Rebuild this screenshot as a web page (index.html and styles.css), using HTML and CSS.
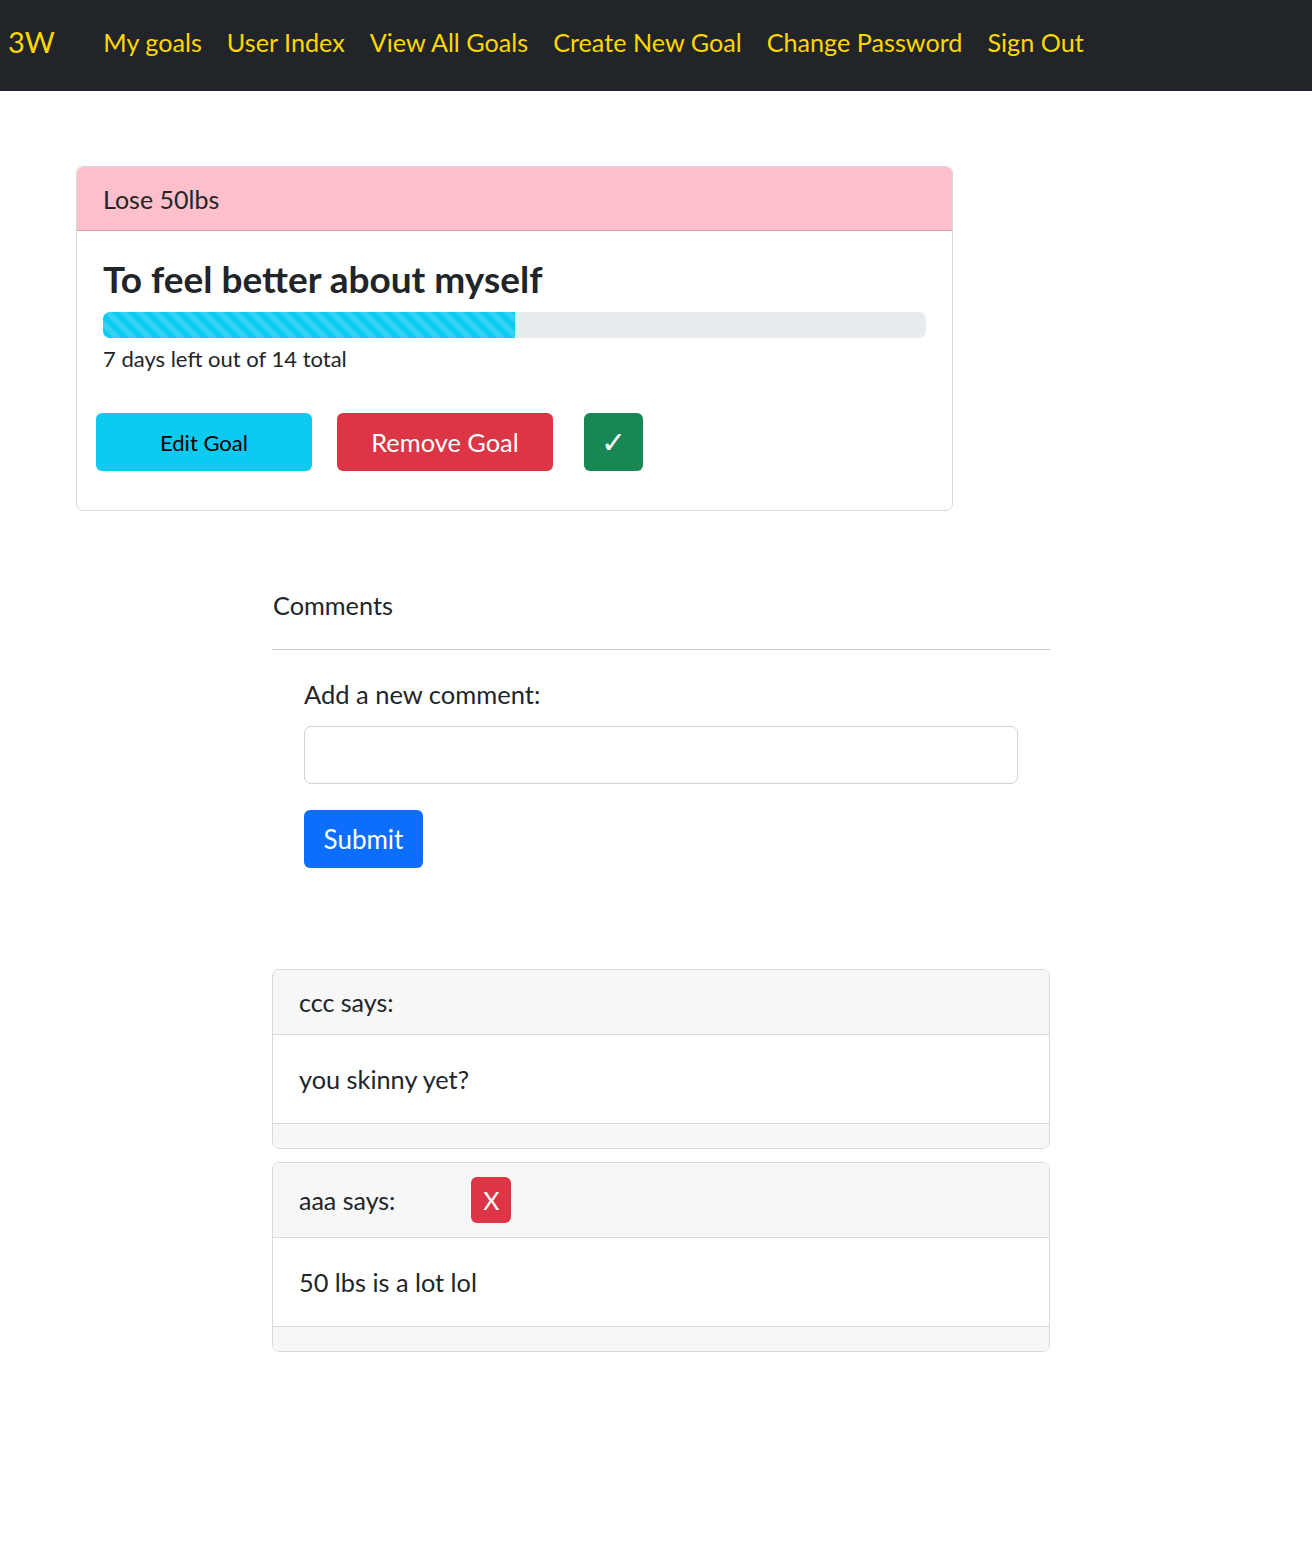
FILE: index.html
```html
<!DOCTYPE html>
<html lang="en">
<head>
<meta charset="utf-8">
<title>3W - Goal</title>
<link rel="stylesheet" href="styles.css">
</head>
<body>
<nav class="navbar">
  <a class="brand" href="#">3W</a>
  <ul class="nav-links">
    <li><a href="#">My goals</a></li>
    <li><a href="#">User Index</a></li>
    <li><a href="#">View All Goals</a></li>
    <li><a href="#">Create New Goal</a></li>
    <li><a href="#">Change Password</a></li>
    <li><a href="#">Sign Out</a></li>
  </ul>
</nav>

<main class="page">
  <section class="goal-card">
    <div class="goal-header">Lose 50lbs</div>
    <div class="goal-body">
      <h2 class="goal-title">To feel better about myself</h2>
      <div class="progress">
        <div class="progress-bar" style="width: 50%"></div>
      </div>
      <p class="days-left">7 days left out of 14 total</p>
      <div class="goal-actions">
        <button class="btn btn-info">Edit Goal</button>
        <button class="btn btn-danger">Remove Goal</button>
        <button class="btn btn-success btn-check">&#10003;</button>
      </div>
    </div>
  </section>

  <section class="comments">
    <h3 class="comments-title">Comments</h3>
    <hr class="divider">
    <form class="comment-form">
      <label class="form-label" for="comment">Add a new comment:</label>
      <input class="form-control" id="comment" type="text">
      <button class="btn btn-primary btn-submit" type="button">Submit</button>
    </form>

    <div class="comment-list">
      <div class="comment-card">
        <div class="comment-header"><span>ccc says:</span></div>
        <div class="comment-body">you skinny yet?</div>
        <div class="comment-footer"></div>
      </div>
      <div class="comment-card">
        <div class="comment-header"><span>aaa says:</span><button class="btn btn-danger btn-x">X</button></div>
        <div class="comment-body">50 lbs is a lot lol</div>
        <div class="comment-footer"></div>
      </div>
    </div>
  </section>
</main>
</body>
</html>
```

FILE: styles.css
```css
* { box-sizing: border-box; }

html, body {
  margin: 0;
  padding: 0;
}

body {
  font-family: "Segoe UI", Lato, "Noto Sans", sans-serif;
  color: #212529;
  background: #fff;
  font-size: 25px;
  line-height: 1.5;
}

.navbar {
  height: 91px;
  background: #212529;
  display: flex;
  align-items: center;
  padding: 0 8px 6px;
}

.brand {
  color: #ffd700;
  text-decoration: none;
  font-size: 29px;
  margin-right: 36px;
  line-height: 1;
  padding-bottom: 2px;
}

.nav-links {
  list-style: none;
  display: flex;
  margin: 0;
  padding: 0;
}

.nav-links a {
  color: #ffd700;
  text-decoration: none;
  font-size: 25.2px;
  padding: 0 12.5px;
  display: block;
}

.page {
  padding-top: 75px;
  padding-bottom: 200px;
}

.goal-card {
  margin-left: 76px;
  width: 877px;
  border: 1px solid #d9d9d9;
  border-radius: 7px;
  overflow: hidden;
}

.goal-header {
  background: #ffc0cb;
  padding: 14px 26px 13px;
  border-bottom: 1px solid #d3a0a9;
  font-size: 25px;
  line-height: 36px;
}

.goal-body {
  padding: 26px 26px 39px;
}

.goal-title {
  margin: 0 0 12px;
  font-size: 37px;
  font-weight: 700;
  line-height: 43px;
}

.progress {
  height: 26px;
  background: #e9ecef;
  border-radius: 7px;
  overflow: hidden;
}

.progress-bar {
  height: 100%;
  background-color: #0dcaf0;
  background-image: linear-gradient(45deg, rgba(255,255,255,.15) 25%, transparent 25%, transparent 50%, rgba(255,255,255,.15) 50%, rgba(255,255,255,.15) 75%, transparent 75%, transparent);
  background-size: 16px 16px;
}

.days-left {
  margin: 5px 0 38px;
  font-size: 22px;
  line-height: 32px;
}

.goal-actions {
  display: flex;
  margin-left: -7px;
}

.btn {
  border: 0;
  border-radius: 6px;
  font-family: inherit;
  cursor: pointer;
  display: inline-flex;
  align-items: center;
  justify-content: center;
  padding: 0;
}

.btn-info {
  background: #0dcaf0;
  color: #000;
  width: 216px;
  height: 58px;
  font-size: 22px;
  margin-right: 25px;
}

.btn-danger {
  background: #dc3545;
  color: #fff;
}

.goal-actions .btn-danger {
  width: 216px;
  height: 58px;
  font-size: 25.4px;
  margin-right: 31px;
}

.btn-success {
  background: #198754;
  color: #fff;
}

.btn-check {
  width: 59px;
  height: 58px;
  font-size: 30px;
  font-family: "DejaVu Sans", sans-serif;
  font-weight: 300;
}

.comments {
  margin-left: 272px;
  width: 778px;
  margin-top: 76px;
}

.comments-title {
  margin: 0 0 26px 1px;
  font-size: 25.3px;
  font-weight: 400;
  line-height: 36px;
}

.divider {
  margin: 0;
  border: 0;
  border-top: 1px solid #c8c8c8;
}

.comment-form {
  padding: 26px 32px 0;
  display: flex;
  flex-direction: column;
  align-items: flex-start;
}

.form-label {
  font-size: 25.5px;
  line-height: 36px;
  margin-bottom: 14px;
}

.form-control {
  width: 714px;
  height: 58px;
  border: 1px solid #ced4da;
  border-radius: 7px;
  font-size: 24px;
  font-family: inherit;
  padding: 0 18px;
  margin-bottom: 26px;
}

.btn-primary {
  background: #0d6efd;
  color: #fff;
}

.btn-submit {
  width: 119px;
  height: 58px;
  font-size: 26px;
}

.comment-list {
  margin-top: 101px;
  display: flex;
  flex-direction: column;
  gap: 13px;
}

.comment-card {
  border: 1px solid #d9d9d9;
  border-radius: 7px;
  overflow: hidden;
}

.comment-header {
  background: #f7f7f7;
  padding: 14px 26px;
  border-bottom: 1px solid #d9d9d9;
  font-size: 25px;
  line-height: 36px;
  display: flex;
  align-items: center;
}

.btn-x {
  width: 40px;
  height: 46px;
  font-size: 25px;
  margin-left: 76px;
}

.comment-body {
  padding: 26px 26px;
  font-size: 25.3px;
  line-height: 36px;
  border-bottom: 1px solid #d9d9d9;
}

.comment-footer {
  background: #f7f7f7;
  height: 24px;
}
```
